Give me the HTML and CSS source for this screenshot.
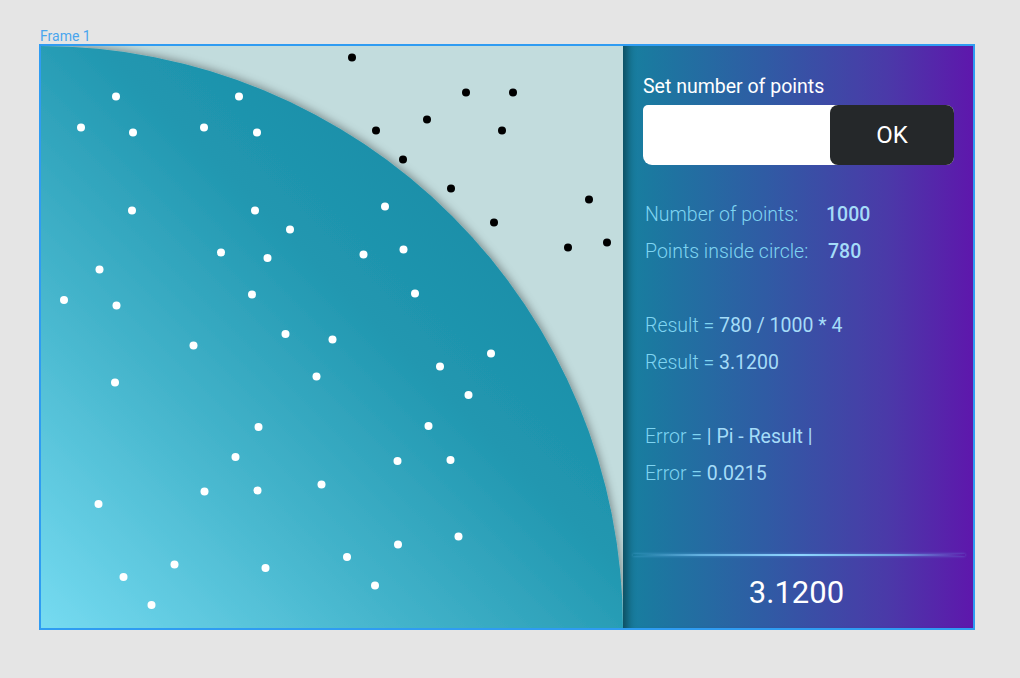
FILE: index.html
```html
<!DOCTYPE html>
<html lang="en">
<head>
<meta charset="utf-8">
<title>Frame 1</title>
<link rel="stylesheet" href="styles.css">
</head>
<body>
<div class="canvas">
  <div class="frame-label">Frame 1</div>
  <div class="frame">
    <div class="plot">
      <svg width="582" height="582" viewBox="41 46 582 582" xmlns="http://www.w3.org/2000/svg">
        <defs>
          <linearGradient id="circ" x1="41" y1="628" x2="623" y2="46" gradientUnits="userSpaceOnUse">
            <stop offset="0" stop-color="#76dbf1"/>
            <stop offset="0.3" stop-color="#45b5cc"/>
            <stop offset="0.55" stop-color="#2197b0"/>
            <stop offset="1" stop-color="#12829d"/>
          </linearGradient>
          <filter id="sh" x="-10%" y="-10%" width="120%" height="120%">
            <feDropShadow dx="1" dy="-1" stdDeviation="5" flood-color="#000" flood-opacity="0.4"/>
          </filter>
        </defs>
        <rect x="41" y="46" width="582" height="582" fill="#c2dcdd"/>
        <circle cx="41" cy="628" r="582" fill="url(#circ)" filter="url(#sh)"/>
        <g fill="#000">
          <circle cx="352" cy="57.5" r="4"/>
          <circle cx="466" cy="92.5" r="4"/>
          <circle cx="513" cy="92.5" r="4"/>
          <circle cx="376" cy="130.5" r="4"/>
          <circle cx="427" cy="119.5" r="4"/>
          <circle cx="502" cy="130.5" r="4"/>
          <circle cx="403" cy="159.5" r="4"/>
          <circle cx="451" cy="188.5" r="4"/>
          <circle cx="589" cy="199.5" r="4"/>
          <circle cx="494" cy="222.5" r="4"/>
          <circle cx="568" cy="247.5" r="4"/>
          <circle cx="607" cy="242.5" r="4"/>
        </g>
        <g fill="#fff">
          <circle cx="116" cy="96.5" r="4"/>
          <circle cx="239" cy="96.5" r="4"/>
          <circle cx="81" cy="127.5" r="4"/>
          <circle cx="133" cy="132.5" r="4"/>
          <circle cx="204" cy="127.5" r="4"/>
          <circle cx="257" cy="132.5" r="4"/>
          <circle cx="132" cy="210.5" r="4"/>
          <circle cx="255" cy="210.5" r="4"/>
          <circle cx="290" cy="229.5" r="4"/>
          <circle cx="385" cy="206.5" r="4"/>
          <circle cx="221" cy="252.5" r="4"/>
          <circle cx="267.5" cy="258" r="4"/>
          <circle cx="363.5" cy="254.5" r="4"/>
          <circle cx="403.5" cy="249.5" r="4"/>
          <circle cx="99.5" cy="269.5" r="4"/>
          <circle cx="64" cy="300" r="4"/>
          <circle cx="116.5" cy="305.5" r="4"/>
          <circle cx="252" cy="294.5" r="4"/>
          <circle cx="415" cy="293.5" r="4"/>
          <circle cx="285.5" cy="334" r="4"/>
          <circle cx="332.5" cy="339.5" r="4"/>
          <circle cx="193.5" cy="345.5" r="4"/>
          <circle cx="491" cy="353.5" r="4"/>
          <circle cx="440" cy="366.5" r="4"/>
          <circle cx="316.5" cy="376.5" r="4"/>
          <circle cx="115" cy="382.5" r="4"/>
          <circle cx="468.5" cy="395" r="4"/>
          <circle cx="258.5" cy="427" r="4"/>
          <circle cx="428.5" cy="426" r="4"/>
          <circle cx="235.5" cy="457" r="4"/>
          <circle cx="397.5" cy="461" r="4"/>
          <circle cx="450.5" cy="460" r="4"/>
          <circle cx="204.5" cy="491.5" r="4"/>
          <circle cx="257.5" cy="490.5" r="4"/>
          <circle cx="321.5" cy="484.5" r="4"/>
          <circle cx="98.5" cy="504" r="4"/>
          <circle cx="458.5" cy="536.5" r="4"/>
          <circle cx="398" cy="544.5" r="4"/>
          <circle cx="347" cy="557" r="4"/>
          <circle cx="174.5" cy="564.5" r="4"/>
          <circle cx="265.5" cy="568" r="4"/>
          <circle cx="123.5" cy="577" r="4"/>
          <circle cx="375" cy="585.5" r="4"/>
          <circle cx="151.5" cy="605" r="4"/>
        </g>
      </svg>
    </div>
    <div class="panel">
      <div class="panel-title">Set number of points</div>
      <div class="input-row">
        <div class="input-field"></div>
        <button class="ok-btn" type="button">OK</button>
      </div>
      <div class="stats">
        <div class="row"><span class="lbl lbl-w1">Number of points:</span><span class="val-strong">1000</span></div>
        <div class="row"><span class="lbl lbl-w2">Points inside circle:</span><span class="val-strong">780</span></div>
        <div class="row"></div>
        <div class="row"><span class="lbl">Result = </span><span class="val">780 / 1000 * 4</span></div>
        <div class="row"><span class="lbl">Result = </span><span class="val">3.1200</span></div>
        <div class="row"></div>
        <div class="row"><span class="lbl">Error = </span><span class="val">| Pi - Result |</span></div>
        <div class="row"><span class="lbl">Error = </span><span class="val">0.0215</span></div>
      </div>
      <div class="divider"></div>
      <div class="result">3.1200</div>
    </div>
  </div>
</div>
</body>
</html>
```

FILE: styles.css
```css
* { box-sizing: border-box; }

html, body {
  margin: 0;
  padding: 0;
  background: #e5e5e5;
  font-family: Roboto, "Liberation Sans", sans-serif;
}

.canvas {
  padding: 29px 0 0 39px;
}

.frame-label {
  font-size: 14px;
  line-height: 15px;
  color: #4aa6ee;
  padding-left: 1px;
}

.frame {
  display: flex;
  width: 936px;
  height: 586px;
  border: 2px solid #2f9cf2;
  background: #c2dcdd;
}

.plot {
  width: 582px;
  height: 582px;
  flex: none;
}

.plot svg {
  display: block;
}

.panel {
  flex: 1;
  display: flex;
  flex-direction: column;
  padding: 30px 19px 0 20px;
  background: linear-gradient(90deg, #16809f 0%, #2f5ca4 40%, #4a3aa8 75%, #5e17ac 100%);
  box-shadow: inset 12px 0 10px -8px rgba(0, 0, 0, 0.45);
}

.panel-title {
  font-size: 19.5px;
  line-height: 22px;
  color: #ffffff;
}

.input-row {
  position: relative;
  margin-top: 7px;
  height: 60px;
  display: flex;
  justify-content: flex-end;
  background: #ffffff;
  border-radius: 5px 8px 8px 9px;
}

.input-field {
  flex: 1;
}

.ok-btn {
  width: 124px;
  height: 60px;
  border: none;
  border-radius: 8px;
  background: #25282a;
  color: #ffffff;
  font-family: Roboto, "Liberation Sans", sans-serif;
  font-size: 24px;
  padding: 0;
}

.stats {
  margin-top: 31px;
  padding-left: 2px;
  font-size: 19.5px;
  line-height: 37px;
}

.row {
  height: 37px;
  display: flex;
}

.lbl {
  font-weight: 300;
  color: #7fd4f1;
  white-space: pre;
}

.lbl-w1 { width: 181px; }
.lbl-w2 { width: 183px; }

.val-strong {
  font-weight: 500;
  color: #a5dcf8;
}

.val {
  font-weight: 400;
  color: #a5dcf8;
}

.divider {
  margin-top: auto;
  margin-left: -10px;
  margin-right: -11px;
  height: 2px;
  background: linear-gradient(90deg, rgba(125, 205, 250, 0) 0%, rgba(125, 205, 250, 0.7) 20%, #8fd6ff 50%, rgba(125, 205, 250, 0.7) 80%, rgba(125, 205, 250, 0) 100%);
  box-shadow: 0 0 3px rgba(120, 200, 255, 0.5);
}

.result {
  height: 72px;
  display: flex;
  align-items: center;
  justify-content: center;
  font-size: 31px;
  color: #ffffff;
  padding-right: 4px;
}
```
